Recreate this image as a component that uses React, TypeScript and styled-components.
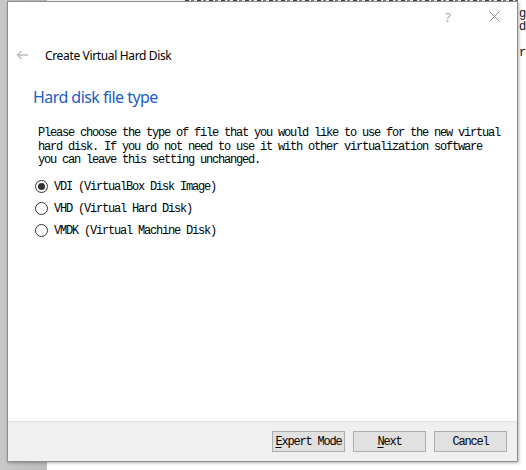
import React, { useState } from "react";
import styled, { createGlobalStyle } from "styled-components";

const Global = createGlobalStyle`
  html, body { margin: 0; padding: 0; }
  body {
    width: 526px;
    height: 470px;
    overflow: hidden;
    background: #ffffff;
    font-family: "Noto Sans", "Liberation Sans", sans-serif;
  }
`;

const MONO = `"Liberation Mono", "DejaVu Sans Mono", monospace`;

const Desktop = styled.div`
  position: relative;
  width: 526px;
  height: 470px;
  overflow: hidden;
  background: #f7f7f7;
`;

const BackPanel = styled.div`
  position: absolute;
  left: 0;
  top: 0;
  width: 47px;
  height: 470px;
  background: linear-gradient(to right, #c8c8c8, #bdbdbd);
`;

const BackDoc = styled.div`
  position: absolute;
  left: 47px;
  top: 0;
  right: 0;
  height: 470px;
  background: #ffffff;
`;

const TopEdge = styled.div`
  position: absolute;
  left: 185px;
  top: 0;
  width: 333px;
  height: 1px;
  background: repeating-linear-gradient(to right, #444 0 4px, #fff 4px 6px, #777 6px 9px, #fff 9px 12px);
`;

const BackText = styled.div`
  position: absolute;
  left: 519px;
  top: 8px;
  font-family: ${MONO};
  font-size: 12px;
  letter-spacing: -1.2px;
  line-height: 13px;
  color: #111;
  white-space: pre;
`;

const Dialog = styled.div`
  position: absolute;
  left: 7px;
  top: 1px;
  width: 511px;
  height: 461px;
  box-sizing: border-box;
  border: 1px solid #8e8e8e;
  background: #ffffff;
  display: flex;
  flex-direction: column;
  box-shadow: 1px 1px 3px rgba(0, 0, 0, 0.3);
`;

const TitleBar = styled.div`
  height: 29px;
  display: flex;
  justify-content: flex-end;
  align-items: stretch;
`;

const CaptionButton = styled.div`
  width: 46px;
  display: flex;
  align-items: center;
  justify-content: center;
  color: #a6a6a6;
  font-size: 13px;
`;

const Header = styled.div`
  height: 48px;
  display: flex;
  align-items: center;
  padding-left: 8px;
  gap: 17px;
`;

const Title = styled.span`
  font-size: 12px;
  color: #000;
  letter-spacing: -0.35px;
`;

const Content = styled.div`
  flex: 1;
  display: flex;
  flex-direction: column;
  padding-left: 25px;
`;

const Heading = styled.div`
  margin-top: 8px;
  font-size: 16px;
  line-height: 20px;
  color: #1a5cc8;
  letter-spacing: -0.55px;
`;

const Description = styled.p`
  margin: 20px 0 0 5px;
  font-family: ${MONO};
  font-size: 12px;
  letter-spacing: -1.2px;
  line-height: 13.5px;
  color: #000;
  white-space: pre;
`;

const RadioGroup = styled.div`
  margin-top: 8px;
  display: flex;
  flex-direction: column;
`;

const RadioRow = styled.label`
  height: 22px;
  display: flex;
  align-items: center;
  gap: 6px;
  margin-left: 2px;
  cursor: default;
  font-family: ${MONO};
  font-size: 12px;
  letter-spacing: -1.2px;
  color: #000;
`;

const RadioCircle = styled.span<{ $checked: boolean }>`
  width: 13px;
  height: 13px;
  box-sizing: border-box;
  border-radius: 50%;
  border: 1px solid #333;
  background: #fff;
  display: flex;
  align-items: center;
  justify-content: center;
  flex: none;
  &::after {
    content: "";
    width: 7px;
    height: 7px;
    border-radius: 50%;
    background: ${(p) => (p.$checked ? "#333" : "transparent")};
  }
`;

const Footer = styled.div`
  height: 40px;
  box-sizing: border-box;
  border-top: 1px solid #dfdfdf;
  background: #f0f0f0;
  display: flex;
  justify-content: flex-end;
  align-items: flex-start;
  padding: 9px 10px 0 0;
  gap: 8px;
`;

const Button = styled.button`
  width: 73px;
  height: 21px;
  box-sizing: border-box;
  border: 1px solid #adadad;
  background: #e1e1e1;
  padding: 0;
  font-family: ${MONO};
  font-size: 12px;
  letter-spacing: -1.2px;
  color: #000;
  display: flex;
  align-items: center;
  justify-content: center;
`;

const Mnemonic = styled.span`
  text-decoration: underline;
  text-underline-offset: 2px;
`;

const options = [
  "VDI (VirtualBox Disk Image)",
  "VHD (Virtual Hard Disk)",
  "VMDK (Virtual Machine Disk)",
];

export default function App() {
  const [sel, setSel] = useState(0);
  return (
    <Desktop>
      <Global />
      <BackPanel />
      <BackDoc />
      <TopEdge />
      <BackText>{"g\ndi\n\nr"}</BackText>
      <Dialog>
        <TitleBar>
          <CaptionButton>?</CaptionButton>
          <CaptionButton>
            <svg width="11" height="11" viewBox="0 0 11 11">
              <path d="M0.5 0.5 L10.5 10.5 M10.5 0.5 L0.5 10.5" stroke="#8a8a8a" strokeWidth="1" fill="none" />
            </svg>
          </CaptionButton>
        </TitleBar>
        <Header>
          <svg width="12" height="10" viewBox="0 0 12 10">
            <path d="M12 5 H1.5 M5.5 1 L1.5 5 L5.5 9" stroke="#bdbdbd" strokeWidth="1.4" fill="none" />
          </svg>
          <Title>Create Virtual Hard Disk</Title>
        </Header>
        <Content>
          <Heading>Hard disk file type</Heading>
          <Description>
            {"Please choose the type of file that you would like to use for the new virtual\nhard disk. If you do not need to use it with other virtualization software\nyou can leave this setting unchanged."}
          </Description>
          <RadioGroup>
            {options.map((o, i) => (
              <RadioRow key={o} onClick={() => setSel(i)}>
                <RadioCircle $checked={sel === i} />
                {o}
              </RadioRow>
            ))}
          </RadioGroup>
        </Content>
        <Footer>
          <Button>
            <Mnemonic>E</Mnemonic>xpert Mode
          </Button>
          <Button>
            <Mnemonic>N</Mnemonic>ext
          </Button>
          <Button>Cancel</Button>
        </Footer>
      </Dialog>
    </Desktop>
  );
}
